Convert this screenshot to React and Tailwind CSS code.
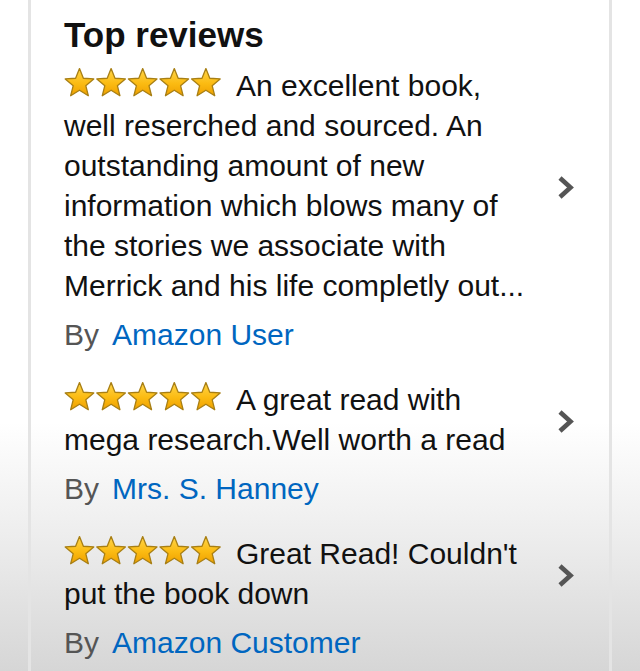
const reviews = [
  {
    text: 'An excellent book, well reserched and sourced. An outstanding amount of new information which blows many of the stories we associate with Merrick and his life completly out...',
    author: 'Amazon User',
  },
  {
    text: 'A great read with mega research.Well worth a read',
    author: 'Mrs. S. Hanney',
  },
  {
    text: "Great Read! Couldn't put the book down",
    author: 'Amazon Customer',
  },
];

const starPoints = (cx, cy, r, ir) => {
  const pts = [];
  for (let i = 0; i < 10; i++) {
    const rad = i % 2 === 0 ? r : ir;
    const a = (Math.PI / 5) * i - Math.PI / 2;
    pts.push(`${(cx + rad * Math.cos(a)).toFixed(2)},${(cy + rad * Math.sin(a)).toFixed(2)}`);
  }
  return pts.join(' ');
};

const Stars = () => (
  <svg
    width="158"
    height="29"
    viewBox="0 0 158 29"
    className="inline-block mr-[14px] align-[-1px]"
  >
    <defs>
      <linearGradient id="starFill" x1="0" y1="0" x2="0" y2="1">
        <stop offset="0%" stopColor="#ffd54a" />
        <stop offset="55%" stopColor="#fbbb12" />
        <stop offset="100%" stopColor="#efa000" />
      </linearGradient>
    </defs>
    {[0, 1, 2, 3, 4].map(i => (
      <polygon
        key={i}
        points={starPoints(15.5 + i * 31.6, 15.6, 15, 6.6)}
        fill="url(#starFill)"
        stroke="#a87f14"
        strokeWidth="1.3"
        strokeLinejoin="round"
      />
    ))}
  </svg>
);

const Chevron = () => (
  <svg width="17" height="25" viewBox="0 0 17 25" className="shrink-0">
    <path d="M3 3 L13.5 12.5 L3 22" fill="none" stroke="#555555" strokeWidth="4.6" />
  </svg>
);

const Review = ({ text, author }) => (
  <div>
    <div className="flex items-center">
      <p className="w-[468px] text-[30px] leading-[40px] text-[#111111]">
        <Stars />
        {text}
      </p>
      <div className="flex-1 flex justify-center pr-[10px] pt-[3px]">
        <Chevron />
      </div>
    </div>
    <div className="mt-[9px] flex gap-[13px] text-[30px] leading-[40px]">
      <span className="text-[#555555]">By</span>
      <span className="text-[#0066c0]">{author}</span>
    </div>
  </div>
);

export default function App() {
  return (
    <div
      className="h-[671px] w-[640px] overflow-hidden bg-[linear-gradient(to_bottom,#ffffff_0%,#ffffff_63%,#ededed_80%,#d6d6d6_100%)]"
      style={{ fontFamily: '"Liberation Sans", Arial, sans-serif' }}
    >
      <div className="ml-[28px] h-full w-[584px] border-x-[3px] border-[#e4e4e4] pl-[33px] pt-[15px]">
        <h2 className="text-[35px] leading-[40px] font-bold text-[#111111]">Top reviews</h2>
        <div className="mt-[11px] flex flex-col gap-[25px]">
          {reviews.map(r => (
            <Review key={r.author} {...r} />
          ))}
        </div>
      </div>
    </div>
  );
}
